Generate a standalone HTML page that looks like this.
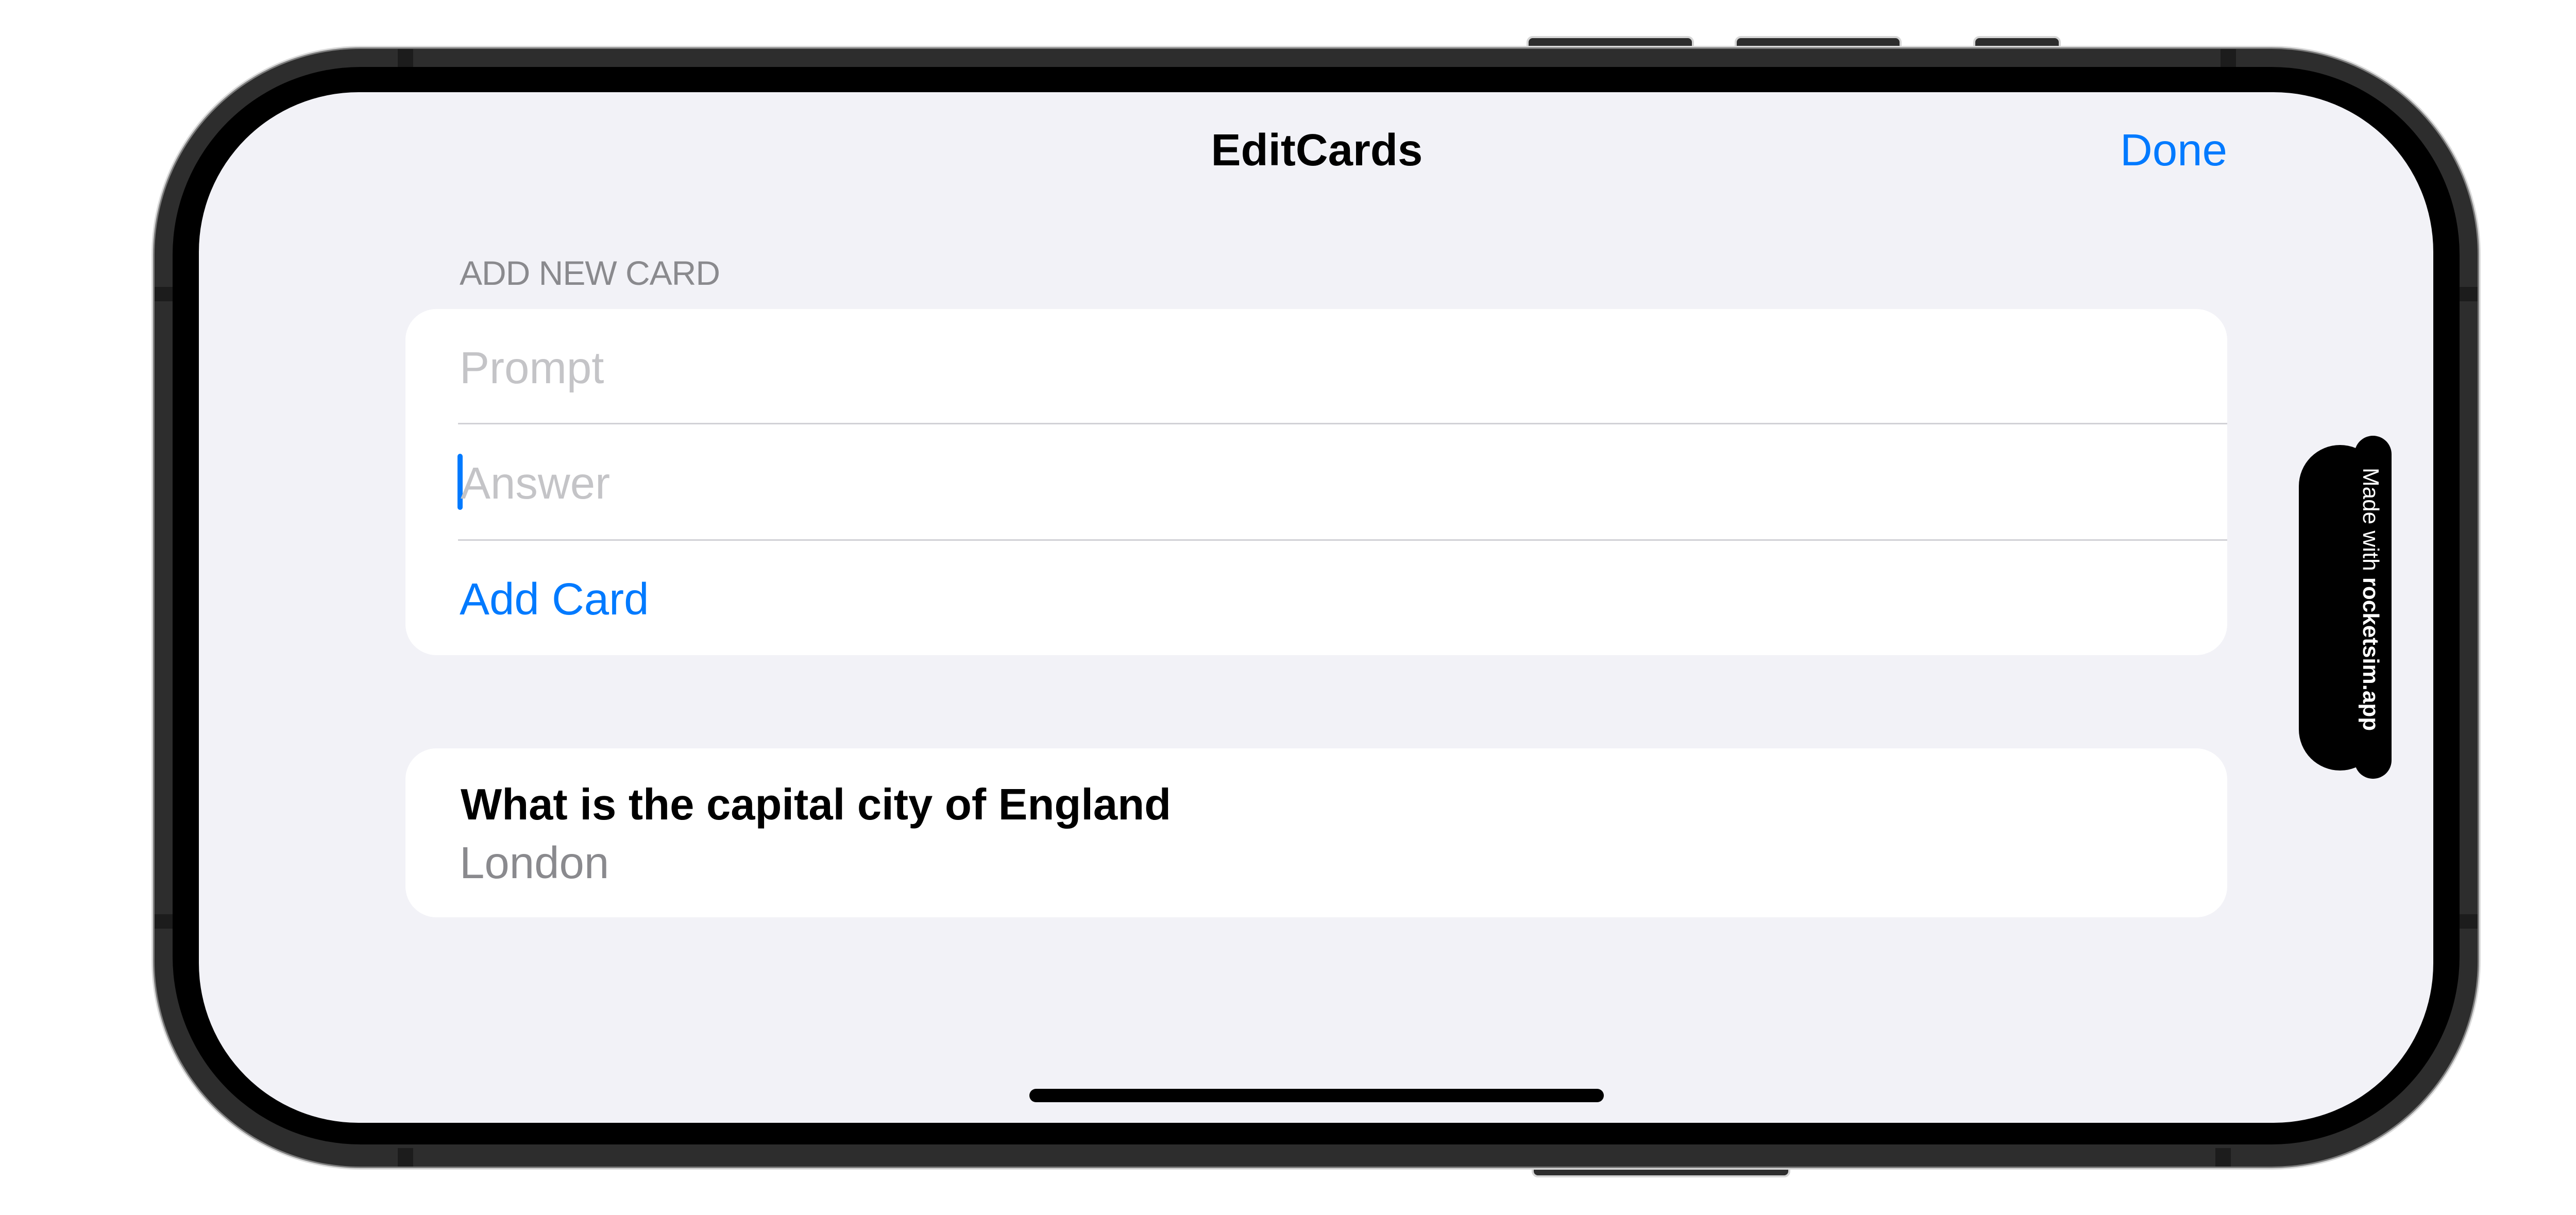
<!DOCTYPE html>
<html><head><meta charset="utf-8"><style>
*{margin:0;padding:0;box-sizing:border-box}
html,body{width:5112px;height:2359px;background:#fff;overflow:hidden;position:relative;font-family:"Liberation Sans",sans-serif}
.abs{position:absolute}
.btn{position:absolute;background:#2d2d2d;border:4px solid #d6d6d6;border-bottom:none;border-radius:12px 12px 0 0}
.t{position:absolute;white-space:nowrap}
</style></head><body>
<div class="btn" style="left:2963px;top:70px;width:325px;height:30px"></div>
<div class="btn" style="left:3367px;top:70px;width:324px;height:30px"></div>
<div class="btn" style="left:3830px;top:70px;width:170px;height:30px"></div>
<div class="btn" style="left:2973px;top:2258px;width:502px;height:28px;border-radius:0 0 12px 12px;border:4px solid #d6d6d6;border-top:none"></div>

<div class="abs" style="left:300px;top:95px;width:4509px;height:2170px;background:#2d2d2d;border-radius:400px;box-shadow:0 0 0 3px #7d7d7d,0 0 0 6px #dadada"></div>
<div class="abs" style="left:772px;top:95px;width:30px;height:36px;background:#1c1c1c"></div>
<div class="abs" style="left:4310px;top:95px;width:30px;height:36px;background:#1c1c1c"></div>
<div class="abs" style="left:772px;top:2229px;width:30px;height:36px;background:#1c1c1c"></div>
<div class="abs" style="left:4300px;top:2229px;width:30px;height:36px;background:#1c1c1c"></div>
<div class="abs" style="left:300px;top:557px;width:36px;height:28px;background:#1c1c1c"></div>
<div class="abs" style="left:4773px;top:557px;width:36px;height:28px;background:#1c1c1c"></div>
<div class="abs" style="left:300px;top:1775px;width:36px;height:28px;background:#1c1c1c"></div>
<div class="abs" style="left:4773px;top:1775px;width:36px;height:28px;background:#1c1c1c"></div>
<div class="abs" style="left:335px;top:130px;width:4439px;height:2092px;background:#000;border-radius:365px"></div>

<div class="abs" style="left:386px;top:179px;width:4337px;height:2001px;background:#f2f2f7;border-radius:310px;overflow:hidden"></div>

<div class="t" style="left:2156px;width:800px;text-align:center;top:248px;font-size:87px;line-height:87px;font-weight:bold;color:#000">EditCards</div>
<div class="t" style="left:3923px;width:400px;text-align:right;top:248px;font-size:87px;line-height:87px;color:#007aff">Done</div>

<div class="t" style="left:892px;top:497px;font-size:66px;line-height:66px;color:#8a8a8e;letter-spacing:-1px">ADD NEW CARD</div>

<div class="abs" style="left:787px;top:600px;width:3536px;height:672px;background:#fff;border-radius:60px"></div>
<div class="abs" style="left:889px;top:821px;width:3434px;height:3px;background:#d1d1d6"></div>
<div class="abs" style="left:889px;top:1047px;width:3434px;height:3px;background:#d1d1d6"></div>
<div class="t" style="left:892px;top:671px;font-size:87px;line-height:87px;color:#c4c4c7">Prompt</div>
<div class="abs" style="left:888px;top:881px;width:10px;height:109px;background:#007aff;border-radius:5px"></div>
<div class="t" style="left:894px;top:895px;font-size:87px;line-height:87px;color:#c4c4c7">Answer</div>
<div class="t" style="left:892px;top:1120px;font-size:87px;line-height:87px;color:#007aff">Add Card</div>

<div class="abs" style="left:787px;top:1453px;width:3536px;height:328px;background:#fff;border-radius:60px"></div>
<div class="t" style="left:894px;top:1520px;font-size:85px;line-height:85px;font-weight:bold;color:#000">What is the capital city of England</div>
<div class="t" style="left:892px;top:1632px;font-size:87px;line-height:87px;color:#8a8a8e">London</div>

<div class="abs" style="left:1998px;top:2114px;width:1115px;height:26px;background:#000;border-radius:13px"></div>

<div class="abs" style="left:4462px;top:864px;width:160px;height:632px;background:#000;border-radius:80px"></div>
<div class="abs" style="left:4570px;top:846px;width:72px;height:666px;background:#000;border-radius:36px"></div>
<div class="t" style="left:4578px;top:908px;writing-mode:vertical-rl;font-size:44px;line-height:46px;color:#fff;width:46px;height:540px">Made with <b>rocketsim.app</b></div>
</body></html>
